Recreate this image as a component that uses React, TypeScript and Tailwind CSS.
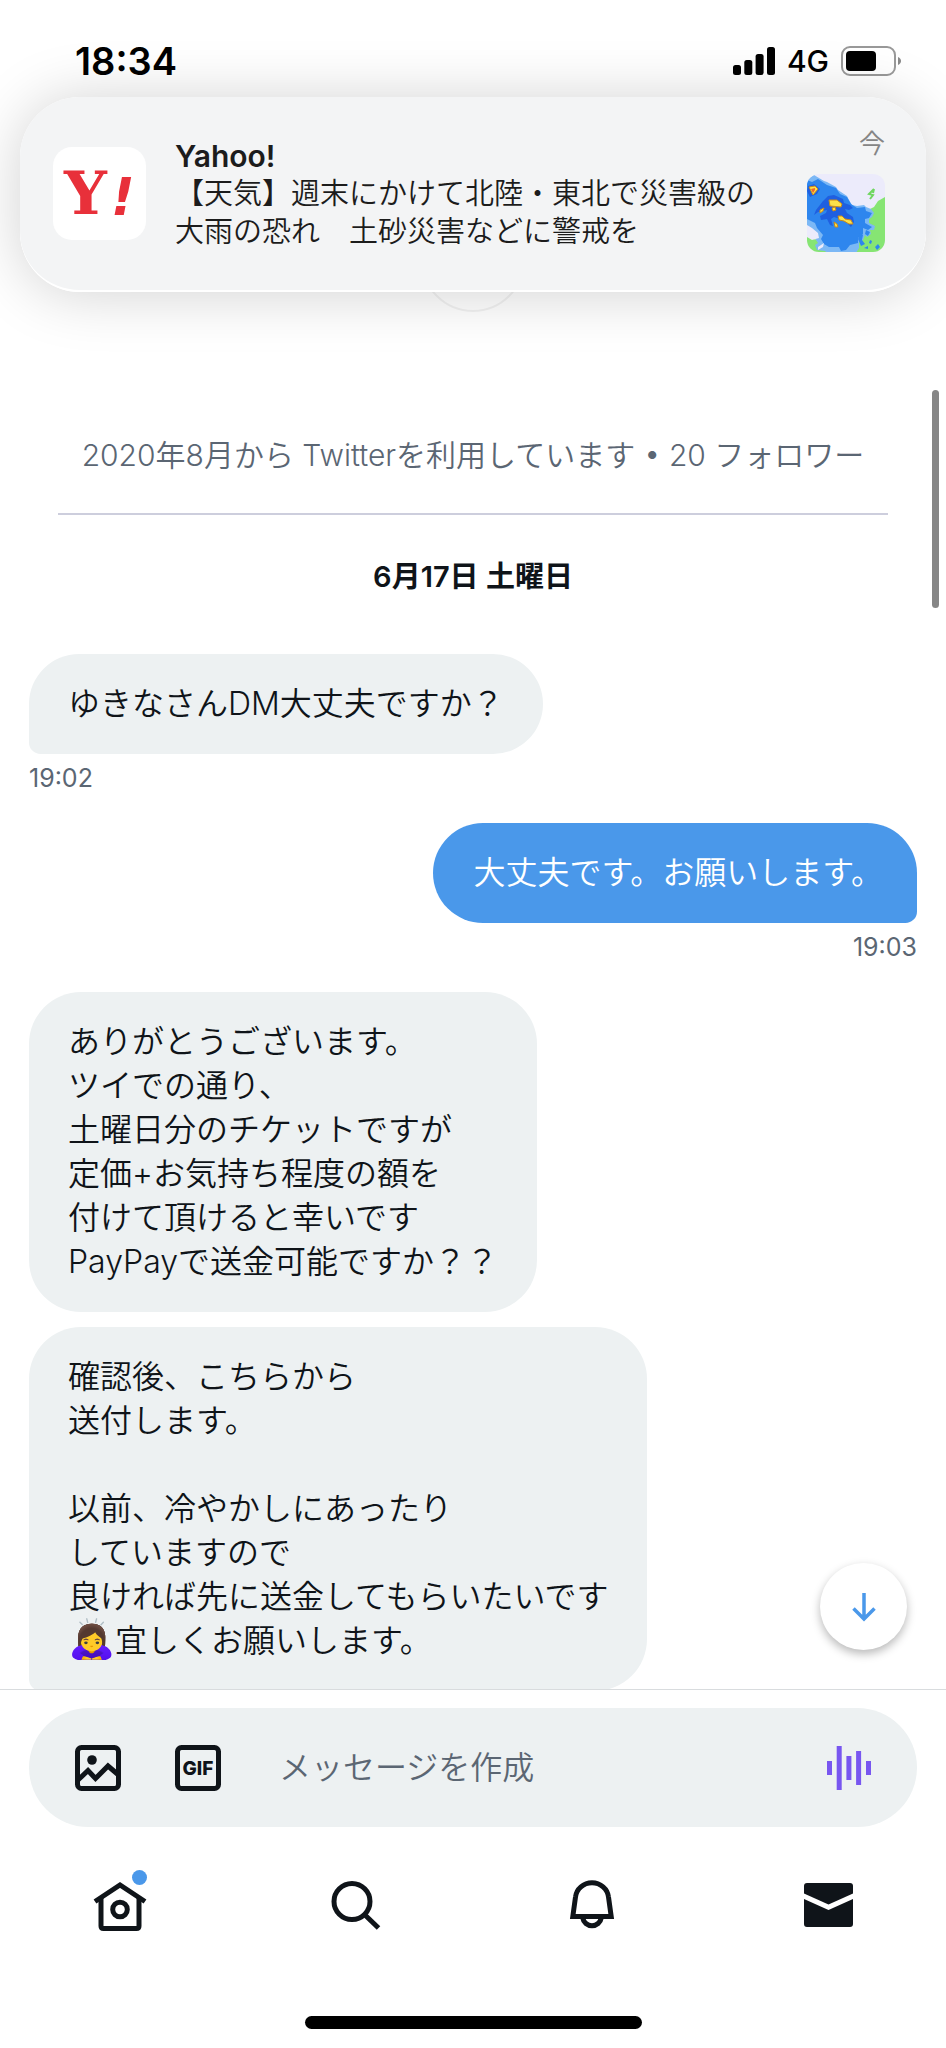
import React, { useState } from "react";
import clsx from "clsx";

interface Message {
  id: number;
  text: React.ReactNode;
  mine?: boolean;
  tail?: boolean;
  time?: string;
}

const messages: Message[] = [
  { id: 1, text: "ゆきなさんDM大丈夫ですか？", tail: true, time: "19:02" },
  {
    id: 2,
    text: "大丈夫です。お願いします。",
    mine: true,
    tail: true,
    time: "19:03",
  },
  {
    id: 3,
    text: "ありがとうございます。\nツイでの通り、\n土曜日分のチケットですが\n定価+お気持ち程度の額を\n付けて頂けると幸いです\nPayPayで送金可能ですか？？",
  },
  {
    id: 4,
    text: (
      <>
        {
          "確認後、こちらから\n送付します。\n\n以前、冷やかしにあったり\nしていますので\n良ければ先に送金してもらいたいです\n"
        }
        <span className="text-[38px] leading-8">🙇‍♀️</span>
        宜しくお願いします。
      </>
    ),
    tail: true,
  },
];

const StatusBar = () => (
  <div className="flex h-[97px] items-end justify-between pr-11 pb-3 pl-[75px] text-black">
    <span className="text-[38px] leading-12 font-semibold">18:34</span>
    <div className="flex h-12 items-center gap-3">
      <svg className="h-7 w-[42px]" viewBox="0 0 42 28" fill="currentColor">
        <rect x="0" y="18" width="8" height="10" rx="2.5" />
        <rect x="11.3" y="13" width="8" height="15" rx="2.5" />
        <rect x="22.6" y="7" width="8" height="21" rx="2.5" />
        <rect x="34" y="0" width="8" height="28" rx="2.5" />
      </svg>
      <span className="text-[30px] leading-8 font-medium">4G</span>
      <svg className="h-[30px] w-[61px]" viewBox="0 0 61 30">
        <rect
          x="1"
          y="1"
          width="53"
          height="28"
          rx="8"
          fill="none"
          stroke="#999"
          strokeWidth="2"
        />
        <rect x="5" y="5" width="30" height="20" rx="4" fill="#000" />
        <path d="M57 11c4 1.500 4 6.500 0 8z" fill="#8a8a8a" />
      </svg>
    </div>
  </div>
);

const YahooLogo = () => (
  <svg
    className="size-[93px] shrink-0 rounded-[19px] bg-white"
    viewBox="0 0 93 93"
    fill="#e8303a"
  >
    <text
      x="11"
      y="67"
      fontFamily="'DejaVu Serif', serif"
      fontWeight="700"
      fontSize="60"
    >
      Y
    </text>
    <text
      x="58"
      y="68"
      fontFamily="'DejaVu Sans', sans-serif"
      fontWeight="700"
      fontStyle="italic"
      fontSize="52"
    >
      !
    </text>
  </svg>
);

const WeatherMap = () => (
  <svg
    className="size-[78px] rounded-xl bg-[#ecebfb]"
    viewBox="0 0 78 78"
    role="img"
    aria-label="雨雲レーダー"
  >
    <path
      d="M78 23l-7 4-4 6-8 4-3 8 2 14-8 12-14 4-4 3h46zM0 62l6 3 8 1 6 4 8 2 2 6H0z"
      fill="#86e573"
    />
    <path
      d="M7 1l10 6 3 1 9 5 2 3 9 6 2 4 3 5 5 1 7-1 2 2 5 2 3 4-2 4-3 2 0 4 6 3-1 4-4 0 1 4-4 3-2-2-2 5-4 2 0 6-3 5-8 0-6 3-3-3-10 2-4-4-8-1-2-5 3-2-4-6-3-1-5-5V6z"
      fill="#7cb8f5"
    />
    <path
      d="M0 6l5 2 6-3 9 6 9 3 4 6 7 3 4 7 6 4 8-1 1 4 6 2-3 5-4 1 0 4 7 4-4 3-5-2 0 6-5 4 0 5-8 2-4 5-5 1-2-4-10 0-5-3-3-5 2-4-6-7-2-5-8-4z"
      fill="#2e86ee"
    />
    <path
      d="M16 27l5-5 6-1 9 4 1 4 6 2 3 3-4 2-4-1 2 4 6 4 1 5-3 5-3-3 0-4-8-1-6-2-3 2 2 7-3-1-3-6-6 1-1-4 6-3 1-3-9 2-4 3 2-5zM1 12l6-2 6 5-3 5-7 3-3-6z"
      fill="#1f5fe0"
    />
    <path
      d="M2 13l6-1 3 3-5 6zM22 26l8 0 5 4-1 3-11-1zM25 34l3-1 1 3-3 1zM13 36l4-2-1 3-3 2zM31 42l4 0 3 3 6 1 2 4-4 0-5-3-5-1zM27 48l3 2 1 3-3 0z"
      fill="#fbe14a"
      stroke="#c98a1c"
      strokeWidth="1"
    />
    <path d="M4 15l4-1 0 2-2 3z" fill="#f0662b" />
    <path
      d="M67 15l-5 5 4 1-3 4M67 15l-1 4"
      fill="none"
      stroke="#6fd660"
      strokeWidth="2"
    />
    <path
      d="M51 65l2-6 3 2-1 5 3 4-4 2zM68 73l3-3 2 3-3 3zM59 56l4 2-2 4-3-2zM57 74l4-2 0 3zM63 66l2 1-1 3-2-1z"
      fill="#2e86ee"
    />
    <path d="M0 51l5 3 6 5 1 5-7 2-5-3zM11 73l6-4-1 4-5 3z" fill="#ecebfb" />
  </svg>
);

const Notification = () => (
  <section className="relative isolate mx-5">
    <div className="absolute -bottom-5 left-1/2 -z-10 size-[104px] -translate-x-1/2 rounded-full border-2 border-black/5" />
    <div className="absolute inset-0 -z-20 rounded-[60px] shadow-[0_2px_60px_rgba(0,0,0,0.18)]" />
    <a
      href="#"
      className="flex h-[195px] items-center rounded-[60px] border-b-2 border-white bg-[#f3f4f5] pr-[41px] pl-[33px] text-[#1c1c1c]"
    >
      <YahooLogo />
      <div className="ml-[29px] flex-1 text-[29px] leading-[38px]">
        <p className="text-[30px] font-semibold">Yahoo!</p>
        <p>【天気】週末にかけて北陸・東北で災害級の</p>
        <p>大雨の恐れ　土砂災害などに警戒を</p>
      </div>
      <div className="mb-2 flex flex-col items-end gap-[14px]">
        <span className="text-[26px] leading-8 text-[#858585]">今</span>
        <WeatherMap />
      </div>
    </a>
  </section>
);

const MessageBubble = ({ text, mine, tail, time }: Message) => (
  <li className={clsx("flex flex-col", mine ? "items-end" : "items-start")}>
    <p
      className={clsx(
        "rounded-[52px] py-7 text-[32px] leading-[44px] whitespace-pre-line",
        mine
          ? "bg-[#4a98ea] pr-[34px] pl-10 text-white"
          : "bg-[#edf1f2] px-[39px]",
        tail && (mine ? "rounded-br-xl" : "rounded-bl-xl"),
      )}
    >
      {text}
    </p>
    {time ? (
      <time className="mt-2 mb-[29px] text-[25px] leading-8 font-normal text-[#5b6673]">
        {time}
      </time>
    ) : (
      <div className="h-[15px]" />
    )}
  </li>
);

const Composer = () => {
  const [draft, setDraft] = useState("");

  return (
    <form
      className="mx-[29px] mt-[18px] flex h-[119px] items-center rounded-full bg-[#edf1f2] px-[46px]"
      onSubmit={(e) => e.preventDefault()}
    >
      <button type="button" aria-label="画像">
        <svg className="size-[46px]" viewBox="0 0 46 46" fill="none">
          <rect
            x="2.500"
            y="2.500"
            width="41"
            height="41"
            rx="4"
            stroke="currentColor"
            strokeWidth="5"
          />
          <circle cx="17" cy="15" r="4.800" fill="currentColor" />
          <path
            d="M3 35l10-9.500 7.500 8L33 21l10 8.500"
            stroke="currentColor"
            strokeWidth="5"
          />
        </svg>
      </button>
      <button type="button" aria-label="GIF" className="ml-[54px]">
        <svg className="size-[46px]" viewBox="0 0 46 46" fill="none">
          <rect
            x="2.500"
            y="2.500"
            width="41"
            height="41"
            rx="4"
            stroke="currentColor"
            strokeWidth="5"
          />
          <text
            x="23"
            y="30"
            textAnchor="middle"
            fill="currentColor"
            fontFamily="Inter, sans-serif"
            fontWeight="800"
            fontSize="19"
          >
            GIF
          </text>
        </svg>
      </button>
      <input
        type="text"
        aria-label="メッセージを作成"
        placeholder="メッセージを作成"
        value={draft}
        onChange={(e) => setDraft(e.target.value)}
        className="ml-[58px] min-w-0 flex-1 bg-transparent text-[32px] outline-none placeholder:text-[#5b6673]"
      />
      <button type="button" aria-label="音声メッセージ">
        <svg className="size-11" viewBox="0 0 44 44" fill="#7856f0">
          <rect x="0" y="15" width="5" height="14" />
          <rect x="9.700" y="0" width="5" height="44" />
          <rect x="19.400" y="10" width="5" height="24" />
          <rect x="29.100" y="5" width="5" height="34" />
          <rect x="39" y="15" width="5" height="14" />
        </svg>
      </button>
    </form>
  );
};

const NavBar = () => (
  <nav className="mt-[18px] grid h-[120px] grid-cols-4 place-items-center pl-0.5">
    <a href="#" aria-label="ホーム" className="relative">
      <svg className="size-[54px]" viewBox="0 0 54 54" fill="none">
        <path
          d="M2 23.500L27 7l25 16.500"
          stroke="currentColor"
          strokeWidth="5"
        />
        <path
          d="M8 20v28q0 2.500 2.500 2.500h33q2.500 0 2.500-2.500V20"
          stroke="currentColor"
          strokeWidth="5"
        />
        <circle
          cx="27"
          cy="31.500"
          r="7.300"
          stroke="currentColor"
          strokeWidth="5"
        />
      </svg>
      <span className="absolute -top-2 right-0 size-[15px] rounded-full bg-[#4a98ea]" />
    </a>
    <a href="#" aria-label="検索">
      <svg className="size-[50px]" viewBox="0 0 50 50" fill="none">
        <circle
          cx="21"
          cy="21.500"
          r="18"
          stroke="currentColor"
          strokeWidth="5"
        />
        <path d="M34 35l13.500 13" stroke="currentColor" strokeWidth="5" />
      </svg>
    </a>
    <a href="#" aria-label="通知">
      <svg className="size-[50px]" viewBox="0 0 50 50" fill="none">
        <path
          d="M5.800 36.500L8.500 17a16.600 16 0 0 1 33 0l2.700 19.500z"
          stroke="currentColor"
          strokeWidth="5"
        />
        <path
          d="M15.800 38a9.300 9 0 0 0 18.400 0"
          stroke="currentColor"
          strokeWidth="5"
        />
      </svg>
    </a>
    <a href="#" aria-label="メッセージ">
      <svg className="size-[50px]" viewBox="0 0 50 50" fill="currentColor">
        <path d="M1 13.500V6q0-3 3-3h43q3 0 3 3v7.500L25.500 24.500z" />
        <path d="M1 19l24.500 11L50 19v25q0 3-3 3H4q-3 0-3-3z" />
      </svg>
    </a>
  </nav>
);

export default function App() {
  return (
    <div
      lang="ja"
      className="flex h-screen flex-col overflow-hidden bg-white font-['Inter','Noto_Sans_CJK_JP',sans-serif] font-[350] text-[#0f1419]"
    >
      <header>
        <StatusBar />
        <Notification />
      </header>
      <main className="relative min-h-0 flex-1">
        <div className="h-full overflow-hidden">
          <div className="mx-[58px] border-b-2 border-[#cdcedd] pt-[143px] pb-[38px] text-center text-[30px] leading-10 whitespace-nowrap text-[#5b6673]">
            2020年8月から Twitterを利用しています • 20 フォロワー
          </div>
          <h2 className="mt-[42px] text-center text-[29px] leading-10 font-semibold">
            6月17日 土曜日
          </h2>
          <ul className="mt-[57px] px-[29px]">
            {messages.map((message) => (
              <MessageBubble key={message.id} {...message} />
            ))}
          </ul>
        </div>
        <div className="absolute top-[98px] right-[7px] h-[218px] w-[7px] rounded-full bg-[#868686]" />
        <button
          aria-label="最新のメッセージへ"
          className="absolute right-[39px] bottom-[39px] flex size-[87px] items-center justify-center rounded-full bg-white text-[#4a98ea] shadow-[0_4px_10px_rgba(0,0,0,0.28)]"
        >
          <svg className="size-8" viewBox="0 0 32 32" fill="none">
            <path
              d="M16 2v26M5.500 17.500L16 28l10.500-10.500"
              stroke="currentColor"
              strokeWidth="3.500"
            />
          </svg>
        </button>
      </main>
      <footer className="border-t border-[#d9dcde]">
        <Composer />
        <NavBar />
        <div className="mx-auto mt-[51px] mb-[19px] h-[13px] w-[337px] rounded-full bg-black" />
      </footer>
    </div>
  );
}
